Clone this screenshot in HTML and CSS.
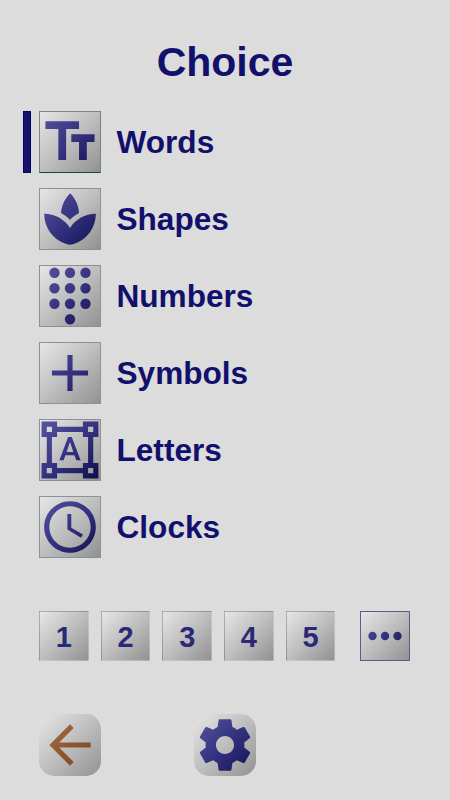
FILE: index.html
```
<!DOCTYPE html>
<html lang="en">
<head>
<meta charset="utf-8">
<title>Choice</title>
<link rel="stylesheet" href="styles.css">
</head>
<body>
<svg class="defs" width="0" height="0" aria-hidden="true">
  <defs>
    <linearGradient id="navy" gradientUnits="userSpaceOnUse" x1="0" y1="0" x2="24" y2="24">
      <stop offset="0" stop-color="#5a58a0"/><stop offset=".5" stop-color="#353380"/><stop offset="1" stop-color="#0c0a48"/>
    </linearGradient>
    <linearGradient id="rust" gradientUnits="userSpaceOnUse" x1="0" y1="0" x2="24" y2="24">
      <stop offset="0" stop-color="#b07550"/><stop offset="1" stop-color="#6c3a14"/>
    </linearGradient>
  </defs>
</svg>
<main class="screen">
  <h1 class="title">Choice</h1>
  <ul class="choices">
    <li class="choice selected">
      <span class="tile"><svg viewBox="0 0 24 24"><path d="M2.5 4v3h5v12h3V7h5V4h-13zm19 5h-9v3h3v7h3v-7h3V9z"/></svg></span>
      <span class="label">Words</span>
    </li>
    <li class="choice">
      <span class="tile"><svg viewBox="0 0 24 24"><path d="M15.49 9.63c-.18-2.79-1.31-5.51-3.43-7.63-2.14 2.14-3.32 4.86-3.55 7.63 1.28.68 2.46 1.56 3.49 2.63 1.03-1.06 2.21-1.94 3.49-2.63zM12 15.45C9.85 12.17 6.18 10 2 10c0 5.32 3.36 9.82 8.03 11.49.63.23 1.29.4 1.97.51.68-.12 1.33-.29 1.97-.51C18.64 19.82 22 15.32 22 10c-4.18 0-7.85 2.17-10 5.45z"/></svg></span>
      <span class="label">Shapes</span>
    </li>
    <li class="choice">
      <span class="tile"><svg viewBox="0 0 24 24"><circle cx="6" cy="3" r="2"/><circle cx="12" cy="3" r="2"/><circle cx="18" cy="3" r="2"/><circle cx="6" cy="9" r="2"/><circle cx="12" cy="9" r="2"/><circle cx="18" cy="9" r="2"/><circle cx="6" cy="15" r="2"/><circle cx="12" cy="15" r="2"/><circle cx="18" cy="15" r="2"/><circle cx="12" cy="21" r="2"/></svg></span>
      <span class="label">Numbers</span>
    </li>
    <li class="choice">
      <span class="tile"><svg viewBox="0 0 24 24"><path d="M19 13h-6v6h-2v-6H5v-2h6V5h2v6h6v2z"/></svg></span>
      <span class="label">Symbols</span>
    </li>
    <li class="choice">
      <span class="tile"><svg viewBox="0 0 24 24"><path d="M23 7V1h-6v2H7V1H1v6h2v10H1v6h6v-2h10v2h6v-6h-2V7h2zM3 3h2v2H3V3zm2 18H3v-2h2v2zm12-2H7v-2H5V7h2V5h10v2h2v10h-2v2zm4 2h-2v-2h2v2zM19 5V3h2v2h-2zm-5.27 9h-3.49l-.73 2H7.89l3.4-9h1.4l3.41 9h-1.63l-.74-2zm-3.04-1.26h2.61L12 8.91l-1.31 3.83z"/></svg></span>
      <span class="label">Letters</span>
    </li>
    <li class="choice">
      <span class="tile"><svg viewBox="0 0 24 24"><path d="M11.99 2C6.47 2 2 6.48 2 12s4.47 10 9.99 10C17.52 22 22 17.52 22 12S17.52 2 11.99 2zM12 20c-4.42 0-8-3.58-8-8s3.58-8 8-8 8 3.58 8 8-3.58 8-8 8zm.5-13H11v6l5.25 3.15.75-1.23-4.5-2.67z"/></svg></span>
      <span class="label">Clocks</span>
    </li>
  </ul>
  <nav class="levels">
    <span class="level">1</span>
    <span class="level">2</span>
    <span class="level">3</span>
    <span class="level">4</span>
    <span class="level">5</span>
    <span class="level more"><svg viewBox="0 0 24 24"><circle cx="6" cy="12" r="2"/><circle cx="12" cy="12" r="2"/><circle cx="18" cy="12" r="2"/></svg></span>
  </nav>
  <footer class="actions">
    <span class="action back"><svg viewBox="0 0 24 24"><path d="M20 11H7.83l5.59-5.59L12 4l-8 8 8 8 1.41-1.41L7.83 13H20v-2z"/></svg></span>
    <span class="action"><svg viewBox="0 0 24 24"><path d="M19.43 12.98c.04-.32.07-.64.07-.98s-.03-.66-.07-.98l2.11-1.65c.19-.15.24-.42.12-.64l-2-3.46c-.12-.22-.39-.3-.61-.22l-2.49 1c-.52-.4-1.08-.73-1.69-.98l-.38-2.65C14.46 2.18 14.25 2 14 2h-4c-.25 0-.46.18-.49.42l-.38 2.65c-.61.25-1.17.59-1.69.98l-2.49-1c-.23-.09-.49 0-.61.22l-2 3.46c-.13.22-.07.49.12.64l2.11 1.65c-.04.32-.07.65-.07.98s.03.66.07.98l-2.11 1.65c-.19.15-.24.42-.12.64l2 3.46c.12.22.39.3.61.22l2.49-1c.52.4 1.08.73 1.69.98l.38 2.65c.03.24.24.42.49.42h4c.25 0 .46-.18.49-.42l.38-2.65c.61-.25 1.17-.59 1.69-.98l2.49 1c.23.09.49 0 .61-.22l2-3.46c.12-.22.07-.49-.12-.64l-2.11-1.65zM12 15.5c-1.93 0-3.5-1.57-3.5-3.5s1.57-3.5 3.5-3.5 3.5 1.57 3.5 3.5-1.57 3.5-3.5 3.5z"/></svg></span>
  </footer>
</main>
</body>
</html>
```
FILE: styles.css
```
*,
*::before { box-sizing: border-box; }

body {
  margin: 0;
  background: #dcdcdc;
  color: #11106c;
  font-family: "Liberation Sans", Arial, sans-serif;
  font-weight: bold;
}

.defs { position: absolute; }

.screen {
  width: 450px;
  height: 800px;
  padding-top: 38px;
  overflow: hidden;
}

.title {
  margin: 0;
  height: 72.5px;
  font-size: 41px;
  line-height: 49px;
  text-align: center;
}

.choices {
  display: flex;
  flex-direction: column;
  gap: 15.15px;
  margin: 0;
  padding: 0 0 0 23px;
  list-style: none;
}

.choice {
  display: flex;
  align-items: center;
  height: 62px;
}

.choice::before {
  content: "";
  flex: none;
  width: 8px;
  height: 62px;
  margin-right: 8px;
}

.selected::before {
  background: #15136c;
  border: 1px solid #04025c;
}

.tile,
.level,
.action {
  flex: none;
  background: linear-gradient(135deg, #e6e6e6, #bebebe 50%, #929292);
}

.tile {
  width: 62px;
  height: 62px;
  border: 1px solid #8b9293;
}

.selected .tile {
  border-color: #7d8484 #758484 #0c4a4c #7d8484;
}

svg {
  display: block;
  fill: url(#navy);
}

.tile svg {
  width: 62px;
  height: 62px;
  margin: -1px;
}

.label {
  margin-left: 15.5px;
  font-size: 31.6px;
  line-height: 62px;
}

.levels {
  display: flex;
  gap: 12px;
  margin: 53px 0 0 39px;
}

.level {
  width: 49.7px;
  height: 50px;
  border: 1px solid rgba(150, 150, 150, .35);
  color: #2b2977;
  font-size: 29px;
  line-height: 50px;
  text-align: center;
}

.more {
  width: 50px;
  margin-left: 12.2px;
  border-color: #5c5a90;
}

.more svg {
  width: 50px;
  height: 50px;
  margin: -1px;
}

.actions {
  display: flex;
  gap: 93px;
  margin: 52.8px 0 0 39px;
}

.action {
  width: 62px;
  height: 62px;
  border-radius: 15px;
}

.action svg {
  width: 62px;
  height: 62px;
}

.back svg { fill: url(#rust); }
```
